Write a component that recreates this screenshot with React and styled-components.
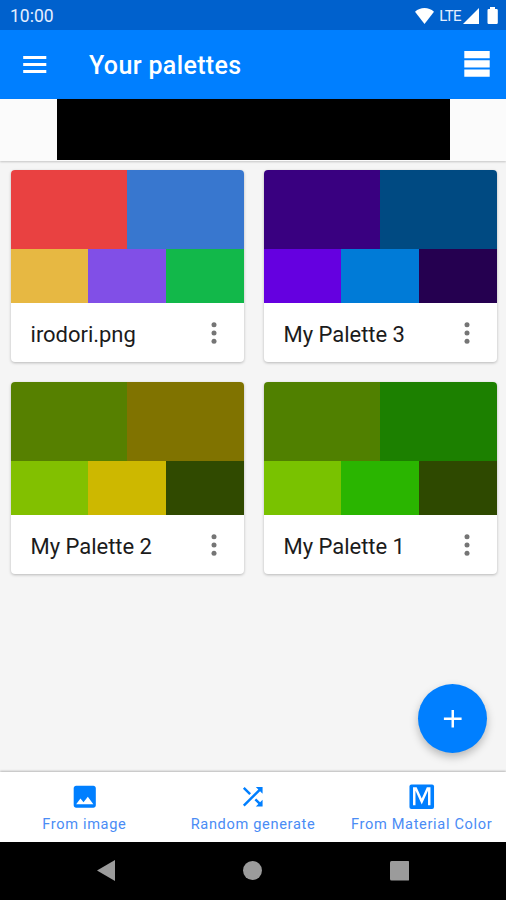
import React from 'react';
import styled, { createGlobalStyle } from 'styled-components';

const GlobalStyle = createGlobalStyle`
  * { box-sizing: border-box; }

  body {
    margin: 0;
    background: #f5f5f5;
    font-family: Roboto, "Liberation Sans", sans-serif;
  }

  svg { display: block; flex: none; }
  button {
    border: 0;
    padding: 0;
    background: none;
    font: inherit;
  }
`;

const Screen = styled.div`
  display: flex;
  flex-direction: column;
  width: 506px;
  height: 900px;
  overflow: hidden;
`;

const StatusBar = styled.div`
  display: flex;
  align-items: center;
  height: 30px;
  padding: 1px 8px 0 10px;
  background: #0061cd;
  color: #fff;
`;

const Clock = styled.span`
  flex: 1;
  color: #e4eeff;
  font-size: 17.5px;
  line-height: 28px;
`;

const Network = styled.span`
  margin: 1px 2px 0 5px;
  color: #e4eeff;
  font-size: 15px;
  letter-spacing: -0.6px;
`;

const AppBar = styled.header`
  display: flex;
  align-items: center;
  height: 68.6px;
  padding: 0 16px 0 20px;
  background: #007fff;
  color: #fff;
`;

const Title = styled.h1`
  flex: 1;
  margin: 3px 0 0 39.5px;
  font-size: 25px;
  font-weight: 500;
  letter-spacing: 0.36px;
`;

const IconButton = styled.button`
  display: flex;
  color: inherit;
`;

const Banner = styled.div`
  display: flex;
  justify-content: center;
  height: 62px;
  padding: 0 0 1px 1px;
  background: #fbfbfb;
  box-shadow: 0 1px 2px rgba(0, 0, 0, 0.2);
`;

const Ad = styled.div`
  width: 393.5px;
  background: #000;
`;

const Main = styled.main`
  position: relative;
  flex: 1;
`;

const Palettes = styled.div`
  display: grid;
  grid-template-columns: 233px 233px;
  gap: 20px;
  padding: 9.8px 9px 0 10.6px;
`;

const Card = styled.article`
  height: 192px;
  overflow: hidden;
  border-radius: 4px;
  background: #fff;
  box-shadow: 0 1px 3px rgba(0, 0, 0, 0.25);
`;

const Swatches = styled.div`
  display: flex;
  height: ${props => props.height}px;
`;

const Swatch = styled.div`
  flex: 1;
  background: ${props => props.color};
`;

const CardFooter = styled.div`
  display: flex;
  align-items: center;
  justify-content: space-between;
  height: 60px;
  padding: 0 15px 0 20px;
  color: #757575;
`;

const Name = styled.span`
  margin-top: 3px;
  color: #1b1b1b;
  font-size: 22px;
  letter-spacing: -0.04px;
`;

const Fab = styled.button`
  position: absolute;
  right: 19px;
  bottom: 18.5px;
  display: flex;
  align-items: center;
  justify-content: center;
  width: 69px;
  height: 69px;
  border-radius: 50%;
  background: #007fff;
  color: #fff;
  box-shadow: 0 4px 8px rgba(0, 0, 0, 0.25);
`;

const BottomBar = styled.nav`
  position: relative;
  display: grid;
  grid-template-columns: repeat(3, 1fr);
  height: 70px;
  background: #fff;
  box-shadow: 0 -1px 2px rgba(0, 0, 0, 0.25);
`;

const Tab = styled.button`
  display: flex;
  flex-direction: column;
  align-items: center;
  padding-top: 10.4px;
  color: #007fff;
`;

const TabLabel = styled.span`
  margin-top: 4.6px;
  color: #4a8cf5;
  font-size: 14.6px;
  line-height: 17px;
  letter-spacing: 0.66px;
  white-space: nowrap;
`;

const SystemBar = styled.div`
  display: flex;
  align-items: center;
  justify-content: space-between;
  height: 58.4px;
  padding: 0 97px;
  background: #000;
  color: #9b9b9b;
`;

const Icon = ({ size = 29.5, viewBox = '0 0 24 24', height, children }) => (
  <svg width={size} height={height || size} viewBox={viewBox} fill="currentColor" aria-hidden="true">
    {children}
  </svg>
);

const palettes = [
  { name: 'irodori.png', top: ['#e94141', '#3877cf'], bottom: ['#e7b842', '#814fe7', '#12b84a'] },
  { name: 'My Palette 3', top: ['#390080', '#004a82'], bottom: ['#6500e0', '#007bd7', '#250050'] },
  { name: 'My Palette 2', top: ['#568000', '#807300'], bottom: ['#82c000', '#cdb800', '#304a00'] },
  { name: 'My Palette 1', top: ['#508000', '#1c8000'], bottom: ['#79c200', '#2ab500', '#2e4900'] },
];

const PaletteCard = ({ name, top, bottom }) => (
  <Card>
    <Swatches height={78.3}>
      {top.map(color => <Swatch key={color} color={color} />)}
    </Swatches>
    <Swatches height={54.2}>
      {bottom.map(color => <Swatch key={color} color={color} />)}
    </Swatches>
    <CardFooter>
      <Name>{name}</Name>
      <IconButton aria-label="More">
        <Icon size={30}>
          <circle cx="12" cy="5.4" r="2" />
          <circle cx="12" cy="12" r="2" />
          <circle cx="12" cy="18.6" r="2" />
        </Icon>
      </IconButton>
    </CardFooter>
  </Card>
);

const App = () => (
  <>
    <GlobalStyle />
    <Screen>
      <StatusBar>
        <Clock>10:00</Clock>
        <Icon size={19} height={16} viewBox="0 0 19 16">
          <path d="M0 3.8C5.4-1.2 13.6-1.2 19 3.8L9.5 16Z" />
        </Icon>
        <Network>LTE</Network>
        <Icon size={16} height={16} viewBox="0 0 16 16">
          <path d="M16 0V16H0Z" />
        </Icon>
        <Icon size={19} height={17} viewBox="0 0 19 17">
          <path d="M11 0h5v2h1.6q1.2 0 1.2 1.2v12.6q0 1.2-1.2 1.2H9.7q-1.2 0-1.2-1.2V3.2Q8.5 2 9.7 2H11Z" />
        </Icon>
      </StatusBar>

      <AppBar>
        <IconButton aria-label="Menu">
          <Icon>
            <path d="M2.6 4.9h18.8v2.5H2.6zM2.6 10.6h18.8v2.5H2.6zM2.6 16.3h18.8v2.5H2.6z" />
          </Icon>
        </IconButton>
        <Title>Your palettes</Title>
        <IconButton aria-label="Change layout">
          <Icon size={26} viewBox="0 0 26 26">
            <path d="M0.3 0h25.4v7.3H0.3zM0.3 9.2h25.4v7.3H0.3zM0.3 18.5h25.4v7.3H0.3z" />
          </Icon>
        </IconButton>
      </AppBar>

      <Banner>
        <Ad />
      </Banner>

      <Main>
        <Palettes>
          {palettes.map(palette => <PaletteCard key={palette.name} {...palette} />)}
        </Palettes>
        <Fab aria-label="Add palette">
          <Icon>
            <path d="M19.2 13h-6.2v6.2h-2V13H4.8v-2H11V4.8h2V11h6.2z" />
          </Icon>
        </Fab>
      </Main>

      <BottomBar>
        <Tab>
          <Icon>
            <path d="M21 19V5c0-1.1-.9-2-2-2H5c-1.1 0-2 .9-2 2v14c0 1.1.9 2 2 2h14c1.1 0 2-.9 2-2zM8.5 13.5l2.5 3.01L14.5 12l4.5 6H5l3.5-4.5z" />
          </Icon>
          <TabLabel>From image</TabLabel>
        </Tab>
        <Tab>
          <Icon>
            <path d="M10.59 9.17 5.41 4 4 5.41l5.17 5.17 1.42-1.41zM14.5 4l2.04 2.04L4 18.59 5.41 20 17.96 7.46 20 9.5V4h-5.5zm.33 9.41-1.41 1.41 3.13 3.13L14.5 20H20v-5.5l-2.04 2.04-3.13-3.13z" />
          </Icon>
          <TabLabel>Random generate</TabLabel>
        </Tab>
        <Tab>
          <Icon>
            <rect x="2" y="2" width="20" height="20" rx="1.6" />
            <path d="M5.9 19V5.2h1.3L12 15.8l4.8-10.6h1.3V19" fill="none" stroke="#fff" strokeWidth="2" />
          </Icon>
          <TabLabel>From Material Color</TabLabel>
        </Tab>
      </BottomBar>

      <SystemBar>
        <Icon size={18} height={21} viewBox="0 0 18 21">
          <path d="M18 0v21L0 10.5z" />
        </Icon>
        <Icon size={19} viewBox="0 0 19 19">
          <circle cx="9.5" cy="9.5" r="9.5" />
        </Icon>
        <Icon size={19.5} viewBox="0 0 19 19">
          <rect width="19" height="19" rx="1.5" />
        </Icon>
      </SystemBar>
    </Screen>
  </>
);

export default App;
